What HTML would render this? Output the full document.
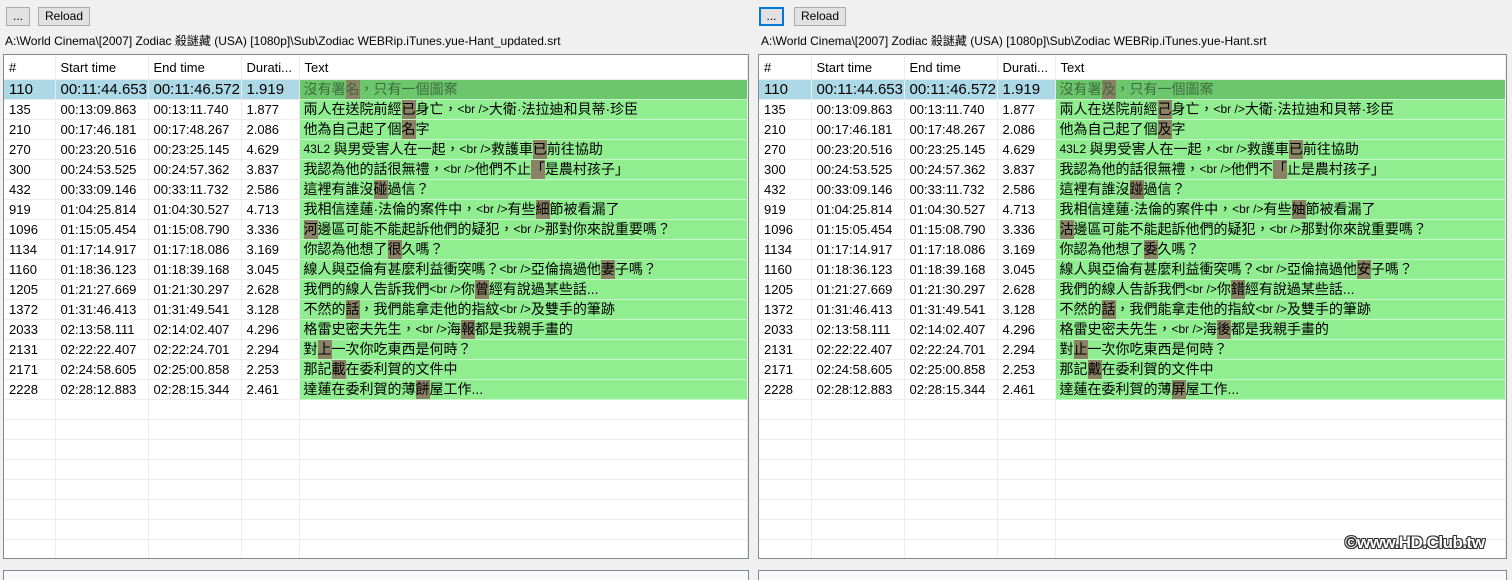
<!DOCTYPE html>
<html><head><meta charset="utf-8"><style>
body{margin:0;width:1512px;height:577px;background:#f0f0f0;position:relative;overflow:hidden;font-family:"Liberation Sans","Noto Sans CJK TC",sans-serif;}
.btn{position:absolute;top:7px;height:19px;border:1px solid #adadad;background:#e1e1e1;font-size:12px;line-height:17px;text-align:center;color:#000;box-sizing:border-box;}
.path{position:absolute;top:32px;font-size:12px;color:#000;white-space:nowrap;}
.panel{position:absolute;top:54px;height:505px;background:#fff;border:1px solid #828790;box-sizing:border-box;overflow:hidden;}
table{border-collapse:collapse;table-layout:fixed;position:absolute;left:0;top:1px;}
td,th{border-right:1px solid #ececec;border-bottom:1px solid #ececec;padding:0 0 0 5px;white-space:nowrap;overflow:hidden;font-weight:normal;text-align:left;}
th{height:23px;font-size:13px;color:#000;line-height:23px;}
td{height:19px;max-height:19px;font-size:13px;color:#000;line-height:19px;}
td.t{background:#90ee90;font-size:14px;padding-left:4px;border-bottom-color:#c8f5c8;}
td.t *{line-height:19px;vertical-align:top;display:inline-block;height:19px;}
tr.sel td{background:#add8e6;font-size:15px;}
tr.sel td.t{background:#6cc76c;color:#3d6b3d;font-size:14px;}
.h{background:#8a8265;font-weight:normal;}
.l{font-size:12px;}
.bot{position:absolute;top:570px;height:10px;border:1px solid #828790;border-bottom:none;background:#fafafa;box-sizing:border-box;}
.wm{position:absolute;left:1345px;top:533px;font-size:17px;font-weight:bold;color:#fff;letter-spacing:-0.5px;text-shadow:1px 1px 0 #333,-1px -1px 0 #333,1px -1px 0 #333,-1px 1px 0 #333,0 1px 0 #333,0 -1px 0 #333,1px 0 0 #333,-1px 0 0 #333;}
</style></head><body>
<div class="btn" style="left:6px;width:24px">...</div>
<div class="btn" style="left:38px;width:52px">Reload</div>
<div class="path" style="left:5px">A:\World Cinema\[2007] Zodiac 殺謎藏 (USA) [1080p]\Sub\Zodiac WEBRip.iTunes.yue-Hant_updated.srt</div>
<div class="btn" style="left:759px;width:25px;border:2px solid #0078d7;line-height:15px">...</div>
<div class="btn" style="left:794px;width:52px">Reload</div>
<div class="path" style="left:761px">A:\World Cinema\[2007] Zodiac 殺謎藏 (USA) [1080p]\Sub\Zodiac WEBRip.iTunes.yue-Hant.srt</div>

<div class="panel" style="left:3px;width:746px">
<table style="width:744px"><colgroup><col style="width:51px"><col style="width:93px"><col style="width:93px"><col style="width:58px"><col></colgroup>
<tr><th>#</th><th>Start time</th><th>End time</th><th>Durati...</th><th>Text</th></tr>
<tr class="sel"><td>110</td><td>00:11:44.653</td><td>00:11:46.572</td><td>1.919</td><td class="t"><span>沒有署</span><b class="h">名</b><span>，只有一個圖案</span></td></tr>
<tr><td>135</td><td>00:13:09.863</td><td>00:13:11.740</td><td>1.877</td><td class="t"><span>兩人在送院前經</span><b class="h">已</b><span>身亡，</span><span class="l">&lt;br /&gt;</span><span>大衛·法拉迪和貝蒂·珍臣</span></td></tr>
<tr><td>210</td><td>00:17:46.181</td><td>00:17:48.267</td><td>2.086</td><td class="t"><span>他為自己起了個</span><b class="h">名</b><span>字</span></td></tr>
<tr><td>270</td><td>00:23:20.516</td><td>00:23:25.145</td><td>4.629</td><td class="t"><span class="l">43L2&nbsp;</span><span>與男受害人在一起，</span><span class="l">&lt;br /&gt;</span><span>救護車</span><b class="h">已</b><span>前往協助</span></td></tr>
<tr><td>300</td><td>00:24:53.525</td><td>00:24:57.362</td><td>3.837</td><td class="t"><span>我認為他的話很無禮，</span><span class="l">&lt;br /&gt;</span><span>他們不止</span><b class="h">「</b><span>是農村孩子」</span></td></tr>
<tr><td>432</td><td>00:33:09.146</td><td>00:33:11.732</td><td>2.586</td><td class="t"><span>這裡有誰沒</span><b class="h">碰</b><span>過信？</span></td></tr>
<tr><td>919</td><td>01:04:25.814</td><td>01:04:30.527</td><td>4.713</td><td class="t"><span>我相信達蓮·法倫的案件中，</span><span class="l">&lt;br /&gt;</span><span>有些</span><b class="h">細</b><span>節被看漏了</span></td></tr>
<tr><td>1096</td><td>01:15:05.454</td><td>01:15:08.790</td><td>3.336</td><td class="t"><b class="h">河</b><span>邊區可能不能起訴他們的疑犯，</span><span class="l">&lt;br /&gt;</span><span>那對你來說重要嗎？</span></td></tr>
<tr><td>1134</td><td>01:17:14.917</td><td>01:17:18.086</td><td>3.169</td><td class="t"><span>你認為他想了</span><b class="h">很</b><span>久嗎？</span></td></tr>
<tr><td>1160</td><td>01:18:36.123</td><td>01:18:39.168</td><td>3.045</td><td class="t"><span>線人與亞倫有甚麼利益衝突嗎？</span><span class="l">&lt;br /&gt;</span><span>亞倫搞過他</span><b class="h">妻</b><span>子嗎？</span></td></tr>
<tr><td>1205</td><td>01:21:27.669</td><td>01:21:30.297</td><td>2.628</td><td class="t"><span>我們的線人告訴我們</span><span class="l">&lt;br /&gt;</span><span>你</span><b class="h">曾</b><span>經有說過某些話...</span></td></tr>
<tr><td>1372</td><td>01:31:46.413</td><td>01:31:49.541</td><td>3.128</td><td class="t"><span>不然的</span><b class="h">話</b><span>，我們能拿走他的指紋</span><span class="l">&lt;br /&gt;</span><span>及雙手的筆跡</span></td></tr>
<tr><td>2033</td><td>02:13:58.111</td><td>02:14:02.407</td><td>4.296</td><td class="t"><span>格雷史密夫先生，</span><span class="l">&lt;br /&gt;</span><span>海</span><b class="h">報</b><span>都是我親手畫的</span></td></tr>
<tr><td>2131</td><td>02:22:22.407</td><td>02:22:24.701</td><td>2.294</td><td class="t"><span>對</span><b class="h">上</b><span>一次你吃東西是何時？</span></td></tr>
<tr><td>2171</td><td>02:24:58.605</td><td>02:25:00.858</td><td>2.253</td><td class="t"><span>那記</span><b class="h">載</b><span>在委利賀的文件中</span></td></tr>
<tr><td>2228</td><td>02:28:12.883</td><td>02:28:15.344</td><td>2.461</td><td class="t"><span>達蓮在委利賀的薄</span><b class="h">餅</b><span>屋工作...</span></td></tr>
<tr><td></td><td></td><td></td><td></td><td></td></tr><tr><td></td><td></td><td></td><td></td><td></td></tr><tr><td></td><td></td><td></td><td></td><td></td></tr><tr><td></td><td></td><td></td><td></td><td></td></tr><tr><td></td><td></td><td></td><td></td><td></td></tr><tr><td></td><td></td><td></td><td></td><td></td></tr><tr><td></td><td></td><td></td><td></td><td></td></tr><tr><td></td><td></td><td></td><td></td><td></td></tr>
</table></div>

<div class="panel" style="left:758px;width:749px">
<table style="width:747px"><colgroup><col style="width:52px"><col style="width:93px"><col style="width:93px"><col style="width:58px"><col></colgroup>
<tr><th>#</th><th>Start time</th><th>End time</th><th>Durati...</th><th>Text</th></tr>
<tr class="sel"><td>110</td><td>00:11:44.653</td><td>00:11:46.572</td><td>1.919</td><td class="t"><span>沒有署</span><b class="h">及</b><span>，只有一個圖案</span></td></tr>
<tr><td>135</td><td>00:13:09.863</td><td>00:13:11.740</td><td>1.877</td><td class="t"><span>兩人在送院前經</span><b class="h">己</b><span>身亡，</span><span class="l">&lt;br /&gt;</span><span>大衛·法拉迪和貝蒂·珍臣</span></td></tr>
<tr><td>210</td><td>00:17:46.181</td><td>00:17:48.267</td><td>2.086</td><td class="t"><span>他為自己起了個</span><b class="h">及</b><span>字</span></td></tr>
<tr><td>270</td><td>00:23:20.516</td><td>00:23:25.145</td><td>4.629</td><td class="t"><span class="l">43L2&nbsp;</span><span>與男受害人在一起，</span><span class="l">&lt;br /&gt;</span><span>救護車</span><b class="h">已</b><span>前往協助</span></td></tr>
<tr><td>300</td><td>00:24:53.525</td><td>00:24:57.362</td><td>3.837</td><td class="t"><span>我認為他的話很無禮，</span><span class="l">&lt;br /&gt;</span><span>他們不</span><b class="h">「</b><span>止是農村孩子」</span></td></tr>
<tr><td>432</td><td>00:33:09.146</td><td>00:33:11.732</td><td>2.586</td><td class="t"><span>這裡有誰沒</span><b class="h">踫</b><span>過信？</span></td></tr>
<tr><td>919</td><td>01:04:25.814</td><td>01:04:30.527</td><td>4.713</td><td class="t"><span>我相信達蓮·法倫的案件中，</span><span class="l">&lt;br /&gt;</span><span>有些</span><b class="h">妯</b><span>節被看漏了</span></td></tr>
<tr><td>1096</td><td>01:15:05.454</td><td>01:15:08.790</td><td>3.336</td><td class="t"><b class="h">沽</b><span>邊區可能不能起訴他們的疑犯，</span><span class="l">&lt;br /&gt;</span><span>那對你來說重要嗎？</span></td></tr>
<tr><td>1134</td><td>01:17:14.917</td><td>01:17:18.086</td><td>3.169</td><td class="t"><span>你認為他想了</span><b class="h">委</b><span>久嗎？</span></td></tr>
<tr><td>1160</td><td>01:18:36.123</td><td>01:18:39.168</td><td>3.045</td><td class="t"><span>線人與亞倫有甚麼利益衝突嗎？</span><span class="l">&lt;br /&gt;</span><span>亞倫搞過他</span><b class="h">安</b><span>子嗎？</span></td></tr>
<tr><td>1205</td><td>01:21:27.669</td><td>01:21:30.297</td><td>2.628</td><td class="t"><span>我們的線人告訴我們</span><span class="l">&lt;br /&gt;</span><span>你</span><b class="h">錯</b><span>經有說過某些話...</span></td></tr>
<tr><td>1372</td><td>01:31:46.413</td><td>01:31:49.541</td><td>3.128</td><td class="t"><span>不然的</span><b class="h">話</b><span>，我們能拿走他的指紋</span><span class="l">&lt;br /&gt;</span><span>及雙手的筆跡</span></td></tr>
<tr><td>2033</td><td>02:13:58.111</td><td>02:14:02.407</td><td>4.296</td><td class="t"><span>格雷史密夫先生，</span><span class="l">&lt;br /&gt;</span><span>海</span><b class="h">後</b><span>都是我親手畫的</span></td></tr>
<tr><td>2131</td><td>02:22:22.407</td><td>02:22:24.701</td><td>2.294</td><td class="t"><span>對</span><b class="h">止</b><span>一次你吃東西是何時？</span></td></tr>
<tr><td>2171</td><td>02:24:58.605</td><td>02:25:00.858</td><td>2.253</td><td class="t"><span>那記</span><b class="h">戴</b><span>在委利賀的文件中</span></td></tr>
<tr><td>2228</td><td>02:28:12.883</td><td>02:28:15.344</td><td>2.461</td><td class="t"><span>達蓮在委利賀的薄</span><b class="h">屏</b><span>屋工作...</span></td></tr>
<tr><td></td><td></td><td></td><td></td><td></td></tr><tr><td></td><td></td><td></td><td></td><td></td></tr><tr><td></td><td></td><td></td><td></td><td></td></tr><tr><td></td><td></td><td></td><td></td><td></td></tr><tr><td></td><td></td><td></td><td></td><td></td></tr><tr><td></td><td></td><td></td><td></td><td></td></tr><tr><td></td><td></td><td></td><td></td><td></td></tr><tr><td></td><td></td><td></td><td></td><td></td></tr>
</table></div>

<div class="bot" style="left:3px;width:746px"></div>
<div class="bot" style="left:758px;width:749px"></div>
<div class="wm">©www.HD.Club.tw</div>
</body></html>
